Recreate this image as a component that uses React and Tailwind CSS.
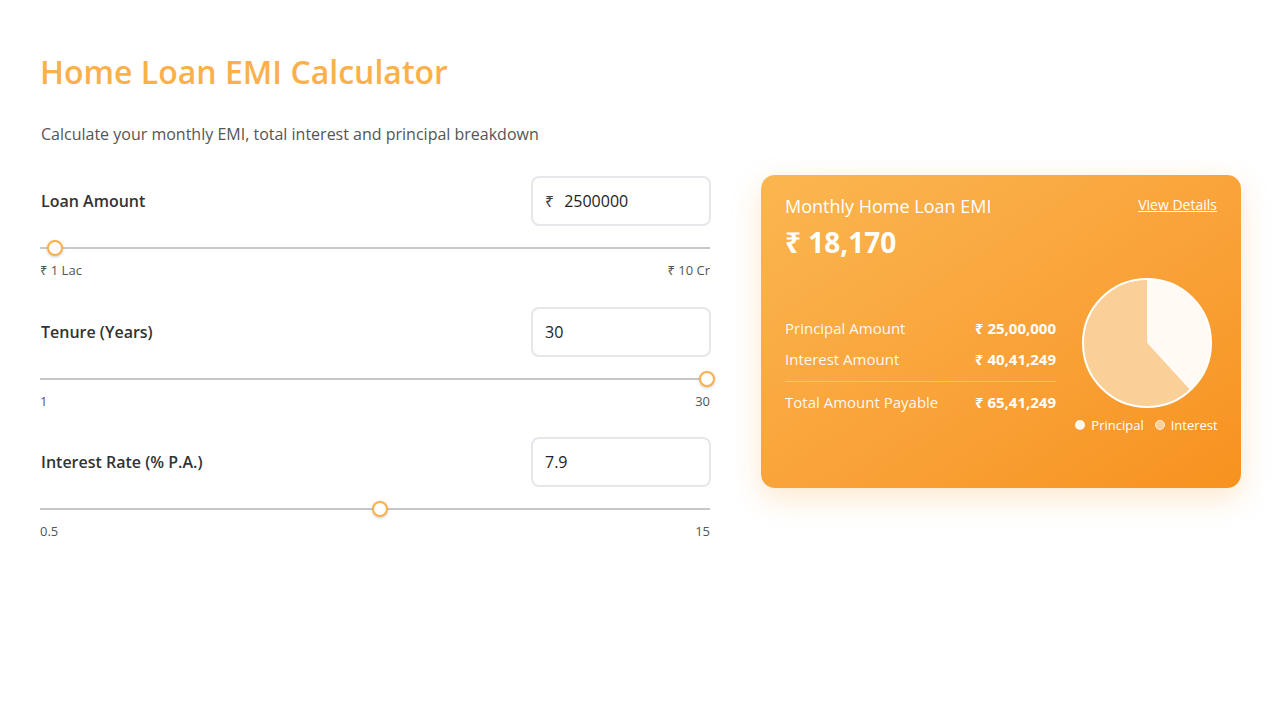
import React from "react";

function Section({ label, prefix, value, thumbLeft, min, max, className }) {
  return (
    <div className={className}>
      <div className="flex items-center justify-between">
        <div className="text-[16px] font-semibold text-[#333333] leading-[24px] pl-[1px]">{label}</div>
        <div className="w-[180px] h-[50px] border-2 border-[#e5e7eb] rounded-[8px] px-[12px] flex items-center text-[16px] text-[#222222] translate-x-[1px]">
          {prefix && <span className="mr-[10px] text-[#444]">₹</span>}
          <span>{value}</span>
        </div>
      </div>
      <div className="relative h-[14px] mt-[15px]">
        <div className="absolute left-0 right-0 top-[6px] h-[2px] bg-[#c8c8c8]"></div>
        <div
          className="absolute top-[-1px] w-[16px] h-[16px] rounded-full bg-white border-2 border-[#fbb04c] shadow-[0_1px_3px_rgba(0,0,0,0.2)]"
          style={{ left: thumbLeft }}
        ></div>
      </div>
      <div className="flex justify-between mt-[7px] text-[13px] leading-[16px] text-[#555555]">
        <span>{min}</span>
        <span>{max}</span>
      </div>
    </div>
  );
}

export default function App() {
  return (
    <div
      className="min-h-screen bg-white px-[40px] pt-[54px]"
      style={{ fontFamily: "'Open Sans', 'Noto Sans', sans-serif" }}
    >
      <h1 className="text-[32px] leading-[36px] font-semibold text-[#fbb04c]">Home Loan EMI Calculator</h1>
      <p className="mt-[32px] text-[16px] leading-[24px] text-[#555555] pl-[1px]">
        Calculate your monthly EMI, total interest and principal breakdown
      </p>
      <div className="flex items-start gap-[51px] mt-[29px]">
        <div className="w-[670px] pt-[1px]">
          <Section label="Loan Amount" prefix value="2500000" thumbLeft="7px" min="₹ 1 Lac" max="₹ 10 Cr" />
          <Section className="mt-[29px]" label="Tenure (Years)" value="30" thumbLeft="659px" min="1" max="30" />
          <Section className="mt-[28px]" label="Interest Rate (% P.A.)" value="7.9" thumbLeft="332px" min="0.5" max="15" />
        </div>
        <div className="w-[480px] h-[313px] rounded-[14px] bg-linear-to-br from-[#fbb650] to-[#f7921e] shadow-[0_10px_30px_rgba(247,148,29,0.22)] px-[24px] pt-[19px] text-white">
          <div className="flex items-start justify-between">
            <div className="text-[18px] leading-[24px]">Monthly Home Loan EMI</div>
            <a className="text-[14px] leading-[20px] underline mt-[1px]">View Details</a>
          </div>
          <div className="mt-[8px] text-[28px] leading-[32px] font-bold">₹ 18,170</div>
          <div className="flex items-start gap-[20px] mt-[20px]">
            <div className="flex-1 pt-[39px] text-[15px] leading-[22px]">
              <div className="flex justify-between">
                <span className="text-white/95">Principal Amount</span>
                <span className="font-bold">₹ 25,00,000</span>
              </div>
              <div className="flex justify-between mt-[9px]">
                <span className="text-white/95">Interest Amount</span>
                <span className="font-bold">₹ 40,41,249</span>
              </div>
              <div className="h-[1px] bg-white/30 mt-[11px]"></div>
              <div className="flex justify-between mt-[9px]">
                <span className="text-white/95">Total Amount Payable</span>
                <span className="font-bold">₹ 65,41,249</span>
              </div>
            </div>
            <div className="w-[141px] flex flex-col items-center">
              <svg width="132" height="132" viewBox="0 0 132 132" className="-mt-[1px]">
                <path d="M66,66 L109.2,113.3 A64,64 0 1,1 66,2 Z" fill="#fbcf98" />
                <path d="M66,66 L66,2 A64,64 0 0,1 109.2,113.3 Z" fill="#fffaf4" />
                <circle cx="66" cy="66" r="64" fill="none" stroke="#ffffff" strokeWidth="2" />
              </svg>
              <div className="flex items-center mt-[7px] text-[13px] leading-[18px] whitespace-nowrap">
                <span className="w-[10px] h-[10px] rounded-full bg-[#fff6ec] mr-[6px]"></span>
                <span>Principal</span>
                <span className="w-[10px] h-[10px] rounded-full bg-[#fbcf98] border-[1.5px] border-[#fff1e0] ml-[11px] mr-[6px]"></span>
                <span>Interest</span>
              </div>
            </div>
          </div>
        </div>
      </div>
    </div>
  );
}
